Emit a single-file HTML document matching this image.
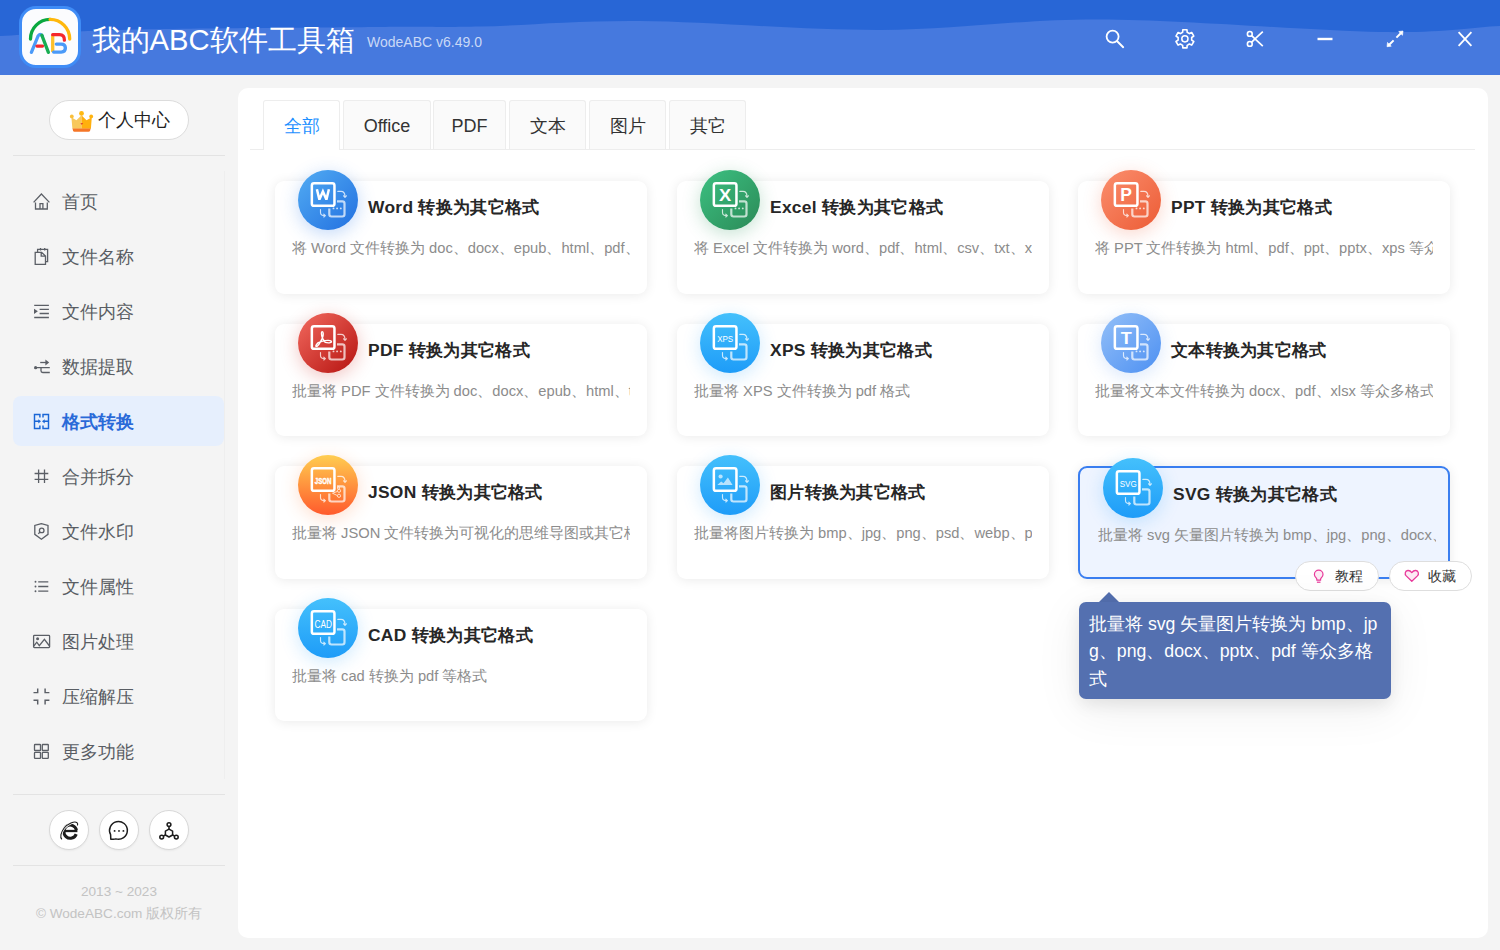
<!DOCTYPE html>
<html><head><meta charset="utf-8">
<style>
*{box-sizing:border-box;margin:0;padding:0}
html,body{width:1500px;height:950px;overflow:hidden}
body{position:relative;background:#f4f4f4;font-family:"Liberation Sans",sans-serif;color:#333}
.abs{position:absolute}
#hdr{position:absolute;left:0;top:0;width:1500px;height:75px;background:#4679de;overflow:hidden}
#hdr svg.wave{position:absolute;left:0;top:0}
#logo{position:absolute;left:19px;top:6px;width:62px;height:62px;border-radius:17px;background:#fbfcfe;border:3px solid #3f8cf6}
#title{position:absolute;left:91.5px;top:21.5px;font-size:29.2px;color:#fff;line-height:36px;white-space:nowrap}
#ver{position:absolute;left:367px;top:34px;font-size:14px;color:#c9d8f6;line-height:16px;white-space:nowrap}
.hic{position:absolute;top:0}
/* sidebar */
#pill{position:absolute;left:49px;top:100px;width:140px;height:40px;border:1px solid #dcdcdc;border-radius:20px;background:#fff}
#pill span{position:absolute;left:48px;top:9px;font-size:18px;line-height:20px;color:#222;white-space:nowrap}
.hr{position:absolute;left:13px;width:212px;height:1px;background:#e3e3e3}
#vline{position:absolute;left:224px;top:171px;width:1px;height:608px;background:#eeeeee}
.mi{position:absolute;left:13px;width:211px;height:50px;border-radius:8px}
.mi.act{background:#e6effd}
.mi svg{position:absolute;left:15px;top:10px}
.mi span{position:absolute;left:49px;top:15.7px;font-size:18px;line-height:20px;color:#595d63;white-space:nowrap}
.mi.act span{color:#2a6ad8;font-weight:bold}
.circ{position:absolute;top:810px;width:40px;height:40px;border-radius:50%;background:#fff;border:1px solid #d8d8d8;box-shadow:0 1px 2px rgba(0,0,0,.05)}
.circ svg{position:absolute;left:0;top:0}
.copy{position:absolute;left:0;width:238px;text-align:center;font-size:13.6px;line-height:16px;color:#c3c3c3;white-space:nowrap}
/* main */
#main{position:absolute;left:238px;top:88px;width:1250px;height:850px;background:#fff;border-radius:10px}
#tabline{position:absolute;left:250px;top:149px;width:1225px;height:1px;background:#ededed}
.tab{position:absolute;top:100px;height:49px;border:1px solid #ededed;border-bottom:none;border-radius:3px 3px 0 0;background:#fafafa;text-align:center;font-size:18px;line-height:50px;color:#333}
.tab.act{background:#fff;color:#1e90ff;height:50px}
.card{position:absolute;width:372px;height:113px;background:#fff;border-radius:9px;box-shadow:0 1px 12px rgba(0,0,0,.085)}
.card.hov{background:#eef4ff;border:2px solid #3a7ef0;height:113px}
.ic{position:absolute;left:22.5px;top:-11px;width:60px;height:60px;border-radius:50%}
.ic svg{position:absolute;left:0;top:0}
.ct{position:absolute;left:93px;top:15px;letter-spacing:0.3px;font-size:17.4px;line-height:22px;font-weight:bold;color:#262626;white-space:nowrap}
.cd{position:absolute;left:17px;top:58px;width:338px;overflow:hidden;font-size:14.7px;line-height:18px;color:#8c8c8c;white-space:nowrap}
.hov .ic{left:23px;top:-10px}
.hov .ct{left:93px;top:15px}
.hov .cd{left:18px;top:58px}
.btn{position:absolute;top:561px;height:30px;border:1px solid #dedede;border-radius:15px;background:#fff;font-size:14px;line-height:28px;color:#333;white-space:nowrap}
#tip{position:absolute;left:1079px;top:602px;width:312px;height:97px;background:#5470b0;border-radius:7px;box-shadow:0 6px 16px rgba(0,0,0,.08),0 10px 48px rgba(0,0,0,.07)}
#tip div{position:absolute;left:10px;top:8.7px;font-size:17.7px;line-height:27.5px;color:#fff;white-space:nowrap}
#tiparr{position:absolute;left:1099px;top:592px;width:0;height:0;border-left:10px solid transparent;border-right:10px solid transparent;border-bottom:10px solid #5470b0}
</style></head><body>

<div id="hdr">
<svg class="wave" width="1500" height="75" viewBox="0 0 1500 75"><path d="M0 0H1500V26C1470.0 27.3 1446.7 33.1 1380.0 32.0C1313.3 30.9 1183.3 19.8 1100.0 19.5C1016.7 19.2 956.7 29.8 880.0 30.0C803.3 30.2 706.7 21.6 640.0 21.0C573.3 20.4 523.3 25.6 480.0 26.6C436.7 27.6 440.0 26.4 380.0 27.0C320.0 27.6 183.3 28.5 120.0 30.0C56.7 31.5 30.0 34.7 0.0 36.0Z" fill="#2866d6"/>
<g fill="none" stroke="#fff" stroke-linecap="round" stroke-linejoin="round">
<circle cx="1112.6" cy="36.6" r="6" stroke-width="1.8"/>
<path d="M1117.2 41.3L1123.2 47.2" stroke-width="1.9"/>
<path d="M1182.65 32.28 L1182.81 29.74 L1186.99 29.74 L1187.15 32.28 L1189.43 33.59 L1191.70 32.46 L1193.79 36.08 L1191.67 37.48 L1191.67 40.12 L1193.79 41.52 L1191.70 45.14 L1189.43 44.01 L1187.15 45.32 L1186.99 47.86 L1182.81 47.86 L1182.65 45.32 L1180.37 44.01 L1178.10 45.14 L1176.01 41.52 L1178.13 40.12 L1178.13 37.48 L1176.01 36.08 L1178.10 32.46 L1180.37 33.59Z" stroke-width="1.6"/>
<circle cx="1184.9" cy="38.8" r="3.1" stroke-width="1.5"/>
<circle cx="1249.8" cy="33.9" r="2.4" stroke-width="1.6"/>
<circle cx="1249.8" cy="43.9" r="2.4" stroke-width="1.6"/>
<path d="M1251.7 35.6L1255 38.9L1262.8 31.6M1251.7 42.2L1255 38.9L1262.8 46.2" stroke-width="1.7" stroke-linecap="butt"/>
<path d="M1317.5 39H1332.5" stroke-width="2.4" stroke-linecap="butt"/>
<path d="M1396.4 37.6L1400.8 33.2M1393.6 40.4L1389.2 44.8" stroke-width="2" stroke-linecap="butt"/>
<path d="M1458.6 32.2L1471.4 45.9M1471.4 32.2L1458.6 45.9" stroke-width="1.8" stroke-linecap="butt"/>
</g>
<path d="M1403 31L1398.7 31.5L1402.5 35.3Z M1387 46.7L1391.3 46.2L1387.5 42.4Z" fill="#fff" stroke="#fff" stroke-width="0.6" stroke-linejoin="round"/>
</svg>
<div id="logo"></div>
<svg class="wave" width="1500" height="75" viewBox="0 0 1500 75" fill="none" stroke-linecap="round" stroke-width="3.3">
<path d="M30.5 39A19.6 19.6 0 0 1 50.1 19.4" stroke="#0aa83f"/>
<path d="M50.1 19.4A19.6 19.6 0 0 1 69.7 39" stroke="#ffb80c"/>
<path d="M31.4 52.4L38 36.2Q40.2 32.6 42.4 36.2" stroke="#4a9af9"/>
<path d="M41.8 35.2L48.4 52.4" stroke="#17ad52"/>
<path d="M37 46.1H42.5" stroke="#f5262b"/>
<path d="M52.7 34.7V52.1" stroke="#fcc02b" stroke-linecap="butt"/>
<path d="M52.7 34.7H59.5Q64.6 34.7 64.4 40.2" stroke="#f5262b"/>
<path d="M56.3 44.1H61.2Q65.4 44.1 65.4 48.1Q65.4 52.1 61.2 52.1H53.6" stroke="#4a9af9"/>
</svg>
<div id="title">我的ABC软件工具箱</div>
<div id="ver">WodeABC v6.49.0</div>
</div>

<!-- sidebar -->
<div id="pill"><svg style="position:absolute;left:16px;top:5px" width="30" height="30" viewBox="0 0 30 30">
<path d="M15.5 9.2L10.4 14.2L5.4 11.2L6.4 22.8H15.5Z" fill="#f8c85c"/>
<path d="M15.5 9.2L20.5 14.2L25.8 11.2L24.9 22.8H15.5Z" fill="#ffb00e"/>
<circle cx="15.5" cy="7.4" r="2.4" fill="#ffb912"/><circle cx="5.8" cy="10.4" r="1.9" fill="#f9bf3a"/><circle cx="25.2" cy="10.4" r="1.9" fill="#ffb30f"/>
<path d="M6.5 22.6H24.6L24 25Q23.6 25.8 22.6 25.8H8.4Q7.4 25.8 7.1 25Z" fill="#f57627"/>
<path d="M14.4 17.2H17.2L15.8 18.8Z" fill="#d8262a"/>
</svg><span>个人中心</span></div>
<div class="hr" style="top:155px"></div>
<div id="vline"></div>
<div class="mi" style="top:176px"><svg width="28" height="28" viewBox="0 0 28 28" fill="none" stroke="#5b5f66" stroke-width="1.3" stroke-linejoin="miter"><path d="M5.6 16.4L13.4 8L21.4 16.4M7.5 16.4V23H19.3V16.4M12 23V17.6H14.9V23"/></svg><span>首页</span></div>
<div class="mi" style="top:231px"><svg width="28" height="28" viewBox="0 0 28 28" fill="none" stroke="#5b5f66" stroke-width="1.3" stroke-linejoin="miter"><path d="M9.6 11.2V8.3H19.6V20.6H17.6M12.5 7V9.6M16.7 7V9.6"/><path d="M7.2 11.3H13.6L17.5 15V23.3H7.2Z M13.2 11.3V15.2H17.5"/></svg><span>文件名称</span></div>
<div class="mi" style="top:286px"><svg width="28" height="28" viewBox="0 0 28 28" fill="none" stroke="#5b5f66" stroke-width="1.3" stroke-linejoin="miter"><path d="M6.2 9.4H20.9M11.6 13.4H20.9M11.6 17.5H20.9M6.2 21.5H20.9"/><path d="M6 12.7V18L9.9 15.35Z" fill="#5b5f66" stroke="none"/></svg><span>文件内容</span></div>
<div class="mi" style="top:341px"><svg width="28" height="28" viewBox="0 0 28 28" fill="none" stroke="#5b5f66" stroke-width="1.3" stroke-linejoin="miter"><path d="M12.2 11.5H19"/><path d="M21.2 11.5L17.4 8.5V14.5Z" fill="#5b5f66" stroke="none"/><circle cx="7.6" cy="16.7" r="1.6" fill="#5b5f66" stroke="none"/><path d="M7.6 16.7H21.8M13 16.7V19.8Q13 21.5 14.7 21.5H21.8"/></svg><span>数据提取</span></div>
<div class="mi act" style="top:396px"><svg width="28" height="28" viewBox="0 0 28 28" fill="none" stroke="#1a66d6" stroke-width="1.45" stroke-linejoin="miter"><path d="M11.9 11.5V8.4H6.5V22.4H11.9V19.5M15 11.5V8.4H20.5V22.4H15V19.5M6.5 15.3H11M20.5 15.3H16"/><path d="M13 15.3L10.3 13.2V17.4Z M14 15.3L16.7 13.2V17.4Z" fill="#1a66d6" stroke="none"/></svg><span>格式转换</span></div>
<div class="mi" style="top:451px"><svg width="28" height="28" viewBox="0 0 28 28" fill="none" stroke="#5b5f66" stroke-width="1.3" stroke-linejoin="miter"><path d="M10.6 8.5V22M16.5 8.5V22M6.6 12.5H20.3M6.6 18.4H20.3"/></svg><span>合并拆分</span></div>
<div class="mi" style="top:506px"><svg width="28" height="28" viewBox="0 0 28 28" fill="none" stroke="#5b5f66" stroke-width="1.3" stroke-linejoin="miter"><path d="M13.4 7.6L6.8 9.5V18.3L13.4 23.2L20 18.3V9.5Z"/><circle cx="13.7" cy="14.4" r="2.3"/><path d="M12 16.1L10.3 17.8"/></svg><span>文件水印</span></div>
<div class="mi" style="top:561px"><svg width="28" height="28" viewBox="0 0 28 28" fill="none" stroke="#5b5f66" stroke-width="1.3" stroke-linejoin="miter"><path d="M10.2 10.8H20.3M10.2 15.5H20.3M10.2 20.2H20.3"/><circle cx="7.5" cy="10.8" r="0.95" fill="#5b5f66" stroke="none"/><circle cx="7.5" cy="15.5" r="0.95" fill="#5b5f66" stroke="none"/><circle cx="7.5" cy="20.2" r="0.95" fill="#5b5f66" stroke="none"/></svg><span>文件属性</span></div>
<div class="mi" style="top:616px"><svg width="28" height="28" viewBox="0 0 28 28" fill="none" stroke="#5b5f66" stroke-width="1.3" stroke-linejoin="miter"><rect x="5.6" y="9.4" width="16" height="12.2" rx="0.8"/><circle cx="9.6" cy="12.7" r="1.5" fill="#5b5f66" stroke="none"/><path d="M5.8 20L8.8 16.2L11.3 19.6L16.4 13.4L21.5 20"/></svg><span>图片处理</span></div>
<div class="mi" style="top:671px"><svg width="28" height="28" viewBox="0 0 28 28" fill="none" stroke="#5b5f66" stroke-width="1.45" stroke-linejoin="miter"><path d="M9.7 7.4V11.6H5.5M17.1 7.4V11.6H21.4M5.5 19.2H9.7V23.4M21.4 19.2H17.1V23.4"/></svg><span>压缩解压</span></div>
<div class="mi" style="top:726px"><svg width="28" height="28" viewBox="0 0 28 28" fill="none" stroke="#5b5f66" stroke-width="1.3" stroke-linejoin="miter"><rect x="6.5" y="8.5" width="6" height="6" rx="0.6"/><rect x="14.3" y="8.5" width="6" height="6" rx="0.6"/><rect x="6.5" y="16.4" width="6" height="6" rx="0.6"/><rect x="14.3" y="16.4" width="6" height="6" rx="0.6"/></svg><span>更多功能</span></div>
<div class="hr" style="top:794px"></div>
<div class="circ" style="left:49px"><svg width="40" height="40" viewBox="0 0 40 40" fill="none" stroke="#1c1c1c" style="position:absolute;left:-1px;top:-1px">
<path d="M16 21H28.4" stroke-width="2.3"/>
<path d="M27.6 21A6.4 6.6 0 1 0 26.8 24.9" stroke-width="3.1" transform="rotate(-8 21.3 21.5)"/>
<path d="M12.9 29.3C10.6 27.4 12 22.4 15 18.3C18.6 13.6 25.6 10.8 28 12.7C29 13.6 28.9 14.6 28.3 15.5" stroke="#fff" stroke-width="2.4"/>
<path d="M12.9 29.3C10.6 27.4 12 22.4 15 18.3C18.6 13.6 25.6 10.8 28 12.7C29 13.6 28.9 14.6 28.3 15.5" stroke-width="1.1"/>
</svg></div>
<div class="circ" style="left:99px"><svg width="40" height="40" viewBox="0 0 40 40" fill="none" stroke="#1c1c1c" style="position:absolute;left:-1px;top:-1px">
<path d="M11.6 24.6A8.9 8.9 0 1 1 16.8 28.9Q15.5 29.4 14 29.3H11.8Z" stroke-width="1.5" stroke-linejoin="round"/>
<circle cx="15.6" cy="20.9" r="0.95" fill="#1c1c1c" stroke="none"/><circle cx="20" cy="20.9" r="0.95" fill="#1c1c1c" stroke="none"/><circle cx="24.4" cy="20.9" r="0.95" fill="#1c1c1c" stroke="none"/>
</svg></div>
<div class="circ" style="left:149px"><svg width="40" height="40" viewBox="0 0 40 40" fill="none" stroke="#1c1c1c" stroke-width="1.5" style="position:absolute;left:-1px;top:-1px">
<path d="M20 19.1L23.6 21.1V25L20 27L16.4 25V21.1Z" stroke-linejoin="round"/>
<path d="M20 19.1V16.6M16.4 25L14.3 26.2M23.6 25L25.7 26.2"/>
<circle cx="20" cy="14.6" r="1.9"/><circle cx="12.7" cy="27.1" r="1.9"/><circle cx="27.3" cy="27.1" r="1.9"/>
</svg></div>
<div class="hr" style="top:865px"></div>
<div class="copy" style="top:884px">2013 ~ 2023</div>
<div class="copy" style="top:906px">© WodeABC.com 版权所有</div>

<!-- main -->
<div id="main"></div>
<div id="tabline"></div>
<div class="tab act" style="left:263px;width:77px">全部</div>
<div class="tab" style="left:343px;width:88px">Office</div>
<div class="tab" style="left:433px;width:73px">PDF</div>
<div class="tab" style="left:509px;width:77px">文本</div>
<div class="tab" style="left:589px;width:77px">图片</div>
<div class="tab" style="left:669px;width:77px">其它</div>

<!--CARDS-->
<div class="card" style="left:275px;top:181px"><div class="ic" style="background:linear-gradient(135deg,#52acf3,#2270e0);box-shadow:0 4px 18px rgba(40,120,235,.28)"><svg width="60" height="60" viewBox="0 0 60 60"><path d="M39 31.3H44.3Q46.5 31.3 46.5 33.5V44.3Q46.5 46.5 44.3 46.5H33.5Q31.3 46.5 31.3 44.3V38.6" fill="none" stroke="rgba(255,255,255,.7)" stroke-width="2.2"/><g fill="rgba(255,255,255,.75)"><circle cx="35.5" cy="38.4" r="0.95"/><circle cx="39.1" cy="38.4" r="0.95"/><circle cx="42.8" cy="38.4" r="0.95"/></g><g fill="none" stroke="rgba(255,255,255,.75)" stroke-width="1.15" stroke-linecap="round" stroke-linejoin="round"><path d="M39.8 21.4H43Q47 21.4 47 26.8M45.6 25.8L47 27.4L48.4 25.8"/><path d="M22.5 39.6V42.4Q22.5 45.6 26.8 45.6M25.8 44.2L27.4 45.6L25.8 47"/></g><rect x="13.85" y="13.25" width="22.6" height="22.6" rx="2.2" fill="none" stroke="#fff" stroke-width="2.5"/><path d="M18.9 19.2L21.4 29.6L24.9 21.4L28.4 29.6L30.9 19.2" fill="none" stroke="#fff" stroke-width="2.5" stroke-linejoin="miter" stroke-miterlimit="3"/></svg></div><div class="ct">Word 转换为其它格式</div><div class="cd">将 Word 文件转换为 doc、docx、epub、html、pdf、ppt 等格式</div></div>
<div class="card" style="left:677px;top:181px"><div class="ic" style="background:linear-gradient(135deg,#3cc182,#2b8a57);box-shadow:0 4px 18px rgba(45,150,95,.28)"><svg width="60" height="60" viewBox="0 0 60 60"><path d="M39 31.3H44.3Q46.5 31.3 46.5 33.5V44.3Q46.5 46.5 44.3 46.5H33.5Q31.3 46.5 31.3 44.3V38.6" fill="none" stroke="rgba(255,255,255,.7)" stroke-width="2.2"/><g fill="rgba(255,255,255,.75)"><circle cx="35.5" cy="38.4" r="0.95"/><circle cx="39.1" cy="38.4" r="0.95"/><circle cx="42.8" cy="38.4" r="0.95"/></g><g fill="none" stroke="rgba(255,255,255,.75)" stroke-width="1.15" stroke-linecap="round" stroke-linejoin="round"><path d="M39.8 21.4H43Q47 21.4 47 26.8M45.6 25.8L47 27.4L48.4 25.8"/><path d="M22.5 39.6V42.4Q22.5 45.6 26.8 45.6M25.8 44.2L27.4 45.6L25.8 47"/></g><rect x="13.85" y="13.25" width="22.6" height="22.6" rx="2.2" fill="none" stroke="#fff" stroke-width="2.5"/><text x="25.15" y="31.4" text-anchor="middle" fill="#fff" font-family="Liberation Sans" font-weight="bold" font-size="17" textLength="12.2" lengthAdjust="spacingAndGlyphs">X</text></svg></div><div class="ct">Excel 转换为其它格式</div><div class="cd">将 Excel 文件转换为 word、pdf、html、csv、txt、xml 等格式</div></div>
<div class="card" style="left:1078px;top:181px"><div class="ic" style="background:linear-gradient(135deg,#fb8f6e,#ec5b35);box-shadow:0 4px 18px rgba(240,100,60,.26)"><svg width="60" height="60" viewBox="0 0 60 60"><path d="M39 31.3H44.3Q46.5 31.3 46.5 33.5V44.3Q46.5 46.5 44.3 46.5H33.5Q31.3 46.5 31.3 44.3V38.6" fill="none" stroke="rgba(255,255,255,.7)" stroke-width="2.2"/><g fill="rgba(255,255,255,.75)"><circle cx="35.5" cy="38.4" r="0.95"/><circle cx="39.1" cy="38.4" r="0.95"/><circle cx="42.8" cy="38.4" r="0.95"/></g><g fill="none" stroke="rgba(255,255,255,.75)" stroke-width="1.15" stroke-linecap="round" stroke-linejoin="round"><path d="M39.8 21.4H43Q47 21.4 47 26.8M45.6 25.8L47 27.4L48.4 25.8"/><path d="M22.5 39.6V42.4Q22.5 45.6 26.8 45.6M25.8 44.2L27.4 45.6L25.8 47"/></g><rect x="13.85" y="13.25" width="22.6" height="22.6" rx="2.2" fill="none" stroke="#fff" stroke-width="2.5"/><text x="25.15" y="31.3" text-anchor="middle" fill="#fff" font-family="Liberation Sans" font-weight="bold" font-size="17.5" >P</text></svg></div><div class="ct">PPT 转换为其它格式</div><div class="cd">将 PPT 文件转换为 html、pdf、ppt、pptx、xps 等众多格式</div></div>

<div class="card" style="left:275px;top:324px;height:112px"><div class="ic" style="background:linear-gradient(135deg,#f26a5f,#b5120f);box-shadow:0 4px 18px rgba(200,30,25,.26)"><svg width="60" height="60" viewBox="0 0 60 60"><path d="M39 31.3H44.3Q46.5 31.3 46.5 33.5V44.3Q46.5 46.5 44.3 46.5H33.5Q31.3 46.5 31.3 44.3V38.6" fill="none" stroke="rgba(255,255,255,.7)" stroke-width="2.2"/><g fill="rgba(255,255,255,.75)"><circle cx="35.5" cy="38.4" r="0.95"/><circle cx="39.1" cy="38.4" r="0.95"/><circle cx="42.8" cy="38.4" r="0.95"/></g><g fill="none" stroke="rgba(255,255,255,.75)" stroke-width="1.15" stroke-linecap="round" stroke-linejoin="round"><path d="M39.8 21.4H43Q47 21.4 47 26.8M45.6 25.8L47 27.4L48.4 25.8"/><path d="M22.5 39.6V42.4Q22.5 45.6 26.8 45.6M25.8 44.2L27.4 45.6L25.8 47"/></g><rect x="13.85" y="13.25" width="22.6" height="22.6" rx="2.2" fill="none" stroke="#fff" stroke-width="2.5"/><path d="M24.3 18.6C23.1 18.6 23.3 22.2 24.4 25.1L27.2 29.4C29.6 30.1 33.6 30.1 33.4 28.6C33.2 27 28.3 27.2 24.5 28.1L20.3 29.6C18.2 31.8 17.4 32.9 18 33.3C18.9 33.7 21 31.3 22.1 29.3L24.4 25.1C25.6 22.1 25.5 18.6 24.3 18.6Z" fill="none" stroke="#fff" stroke-width="1.4" stroke-linejoin="round"/></svg></div><div class="ct">PDF 转换为其它格式</div><div class="cd">批量将 PDF 文件转换为 doc、docx、epub、html、txt 等格式</div></div>
<div class="card" style="left:677px;top:324px;height:112px"><div class="ic" style="background:linear-gradient(180deg,#44c0fc,#1e9cf8);box-shadow:0 4px 18px rgba(30,160,250,.22)"><svg width="60" height="60" viewBox="0 0 60 60"><path d="M39 31.3H44.3Q46.5 31.3 46.5 33.5V44.3Q46.5 46.5 44.3 46.5H33.5Q31.3 46.5 31.3 44.3V38.6" fill="none" stroke="rgba(255,255,255,.7)" stroke-width="2.2"/><g fill="none" stroke="rgba(255,255,255,.75)" stroke-width="1.15" stroke-linecap="round" stroke-linejoin="round"><path d="M39.8 21.4H43Q47 21.4 47 26.8M45.6 25.8L47 27.4L48.4 25.8"/><path d="M22.5 39.6V42.4Q22.5 45.6 26.8 45.6M25.8 44.2L27.4 45.6L25.8 47"/></g><rect x="13.85" y="13.25" width="22.6" height="22.6" rx="2.2" fill="none" stroke="#fff" stroke-width="2.5"/><text x="25.15" y="28.6" text-anchor="middle" fill="#fff" font-family="Liberation Sans" font-size="8.6" font-weight="normal" textLength="16" lengthAdjust="spacingAndGlyphs">XPS</text></svg></div><div class="ct">XPS 转换为其它格式</div><div class="cd">批量将 XPS 文件转换为 pdf 格式</div></div>
<div class="card" style="left:1078px;top:324px;height:112px"><div class="ic" style="background:linear-gradient(135deg,#94c0f8,#4d90f2);box-shadow:0 4px 18px rgba(80,145,240,.22)"><svg width="60" height="60" viewBox="0 0 60 60"><path d="M39 31.3H44.3Q46.5 31.3 46.5 33.5V44.3Q46.5 46.5 44.3 46.5H33.5Q31.3 46.5 31.3 44.3V38.6" fill="none" stroke="rgba(255,255,255,.7)" stroke-width="2.2"/><g fill="rgba(255,255,255,.75)"><circle cx="35.5" cy="38.4" r="0.95"/><circle cx="39.1" cy="38.4" r="0.95"/><circle cx="42.8" cy="38.4" r="0.95"/></g><g fill="none" stroke="rgba(255,255,255,.75)" stroke-width="1.15" stroke-linecap="round" stroke-linejoin="round"><path d="M39.8 21.4H43Q47 21.4 47 26.8M45.6 25.8L47 27.4L48.4 25.8"/><path d="M22.5 39.6V42.4Q22.5 45.6 26.8 45.6M25.8 44.2L27.4 45.6L25.8 47"/></g><rect x="13.85" y="13.25" width="22.6" height="22.6" rx="2.2" fill="none" stroke="#fff" stroke-width="2.5"/><text x="25.15" y="31.4" text-anchor="middle" fill="#fff" font-family="Liberation Sans" font-weight="bold" font-size="17" textLength="11" lengthAdjust="spacingAndGlyphs">T</text></svg></div><div class="ct">文本转换为其它格式</div><div class="cd">批量将文本文件转换为 docx、pdf、xlsx 等众多格式</div></div>

<div class="card" style="left:275px;top:466px"><div class="ic" style="background:linear-gradient(180deg,#ffcd50,#ff5a2c);box-shadow:0 4px 18px rgba(255,120,50,.24)"><svg width="60" height="60" viewBox="0 0 60 60"><path d="M39 31.3H44.3Q46.5 31.3 46.5 33.5V44.3Q46.5 46.5 44.3 46.5H33.5Q31.3 46.5 31.3 44.3V38.6" fill="none" stroke="rgba(255,255,255,.7)" stroke-width="2.2"/><g fill="none" stroke="rgba(255,255,255,.7)" stroke-width="1"><path d="M34.5 38.2L39 36.6M34.5 38.2L39 40.4"/><circle cx="41" cy="35.8" r="1.6"/><circle cx="41" cy="40.8" r="1.6"/><circle cx="40.5" cy="33" r="1.1"/></g><g fill="none" stroke="rgba(255,255,255,.75)" stroke-width="1.15" stroke-linecap="round" stroke-linejoin="round"><path d="M39.8 21.4H43Q47 21.4 47 26.8M45.6 25.8L47 27.4L48.4 25.8"/><path d="M22.5 39.6V42.4Q22.5 45.6 26.8 45.6M25.8 44.2L27.4 45.6L25.8 47"/></g><rect x="13.85" y="13.25" width="22.6" height="22.6" rx="2.2" fill="none" stroke="#fff" stroke-width="2.5"/><text x="25.15" y="28.5" text-anchor="middle" fill="#fff" stroke="#fff" stroke-width="0.45" font-family="Liberation Sans" font-size="9.4" font-weight="bold" textLength="16.6" lengthAdjust="spacingAndGlyphs">JSON</text></svg></div><div class="ct">JSON 转换为其它格式</div><div class="cd">批量将 JSON 文件转换为可视化的思维导图或其它格式</div></div>
<div class="card" style="left:677px;top:466px"><div class="ic" style="background:linear-gradient(180deg,#44c0fc,#1e9cf8);box-shadow:0 4px 18px rgba(30,160,250,.22)"><svg width="60" height="60" viewBox="0 0 60 60"><path d="M39 31.3H44.3Q46.5 31.3 46.5 33.5V44.3Q46.5 46.5 44.3 46.5H33.5Q31.3 46.5 31.3 44.3V38.6" fill="none" stroke="rgba(255,255,255,.7)" stroke-width="2.2"/><g fill="none" stroke="rgba(255,255,255,.75)" stroke-width="1.15" stroke-linecap="round" stroke-linejoin="round"><path d="M39.8 21.4H43Q47 21.4 47 26.8M45.6 25.8L47 27.4L48.4 25.8"/><path d="M22.5 39.6V42.4Q22.5 45.6 26.8 45.6M25.8 44.2L27.4 45.6L25.8 47"/></g><rect x="13.85" y="13.25" width="22.6" height="22.6" rx="2.2" fill="none" stroke="#fff" stroke-width="2.5"/><g fill="rgba(255,255,255,.65)"><circle cx="20.6" cy="21.5" r="2.1"/><path d="M17.3 30L21.2 26.4L23.5 28.2L27.9 22.6L32.6 30Z"/></g></svg></div><div class="ct">图片转换为其它格式</div><div class="cd">批量将图片转换为 bmp、jpg、png、psd、webp、pdf 等格式</div></div>
<div class="card hov" style="left:1078px;top:466px"><div class="ic" style="background:linear-gradient(180deg,#44c0fc,#1e9cf8);box-shadow:0 4px 18px rgba(30,160,250,.22)"><svg width="60" height="60" viewBox="0 0 60 60"><path d="M39 31.3H44.3Q46.5 31.3 46.5 33.5V44.3Q46.5 46.5 44.3 46.5H33.5Q31.3 46.5 31.3 44.3V38.6" fill="none" stroke="rgba(255,255,255,.7)" stroke-width="2.2"/><g fill="none" stroke="rgba(255,255,255,.75)" stroke-width="1.15" stroke-linecap="round" stroke-linejoin="round"><path d="M39.8 21.4H43Q47 21.4 47 26.8M45.6 25.8L47 27.4L48.4 25.8"/><path d="M22.5 39.6V42.4Q22.5 45.6 26.8 45.6M25.8 44.2L27.4 45.6L25.8 47"/></g><rect x="13.85" y="13.25" width="22.6" height="22.6" rx="2.2" fill="none" stroke="#fff" stroke-width="2.5"/><text x="25.15" y="28.9" text-anchor="middle" fill="#fff" font-family="Liberation Sans" font-size="8.8" font-weight="normal" textLength="17" lengthAdjust="spacingAndGlyphs">SVG</text></svg></div><div class="ct">SVG 转换为其它格式</div><div class="cd">批量将 svg 矢量图片转换为 bmp、jpg、png、docx、pptx、pdf 等众多格式</div></div>

<div class="card" style="left:275px;top:609px;height:112px"><div class="ic" style="background:linear-gradient(180deg,#44c0fc,#1e9cf8);box-shadow:0 4px 18px rgba(30,160,250,.22)"><svg width="60" height="60" viewBox="0 0 60 60"><path d="M39 31.3H44.3Q46.5 31.3 46.5 33.5V44.3Q46.5 46.5 44.3 46.5H33.5Q31.3 46.5 31.3 44.3V38.6" fill="none" stroke="rgba(255,255,255,.7)" stroke-width="2.2"/><g fill="none" stroke="rgba(255,255,255,.75)" stroke-width="1.15" stroke-linecap="round" stroke-linejoin="round"><path d="M39.8 21.4H43Q47 21.4 47 26.8M45.6 25.8L47 27.4L48.4 25.8"/><path d="M22.5 39.6V42.4Q22.5 45.6 26.8 45.6M25.8 44.2L27.4 45.6L25.8 47"/></g><rect x="13.85" y="13.25" width="22.6" height="22.6" rx="2.2" fill="none" stroke="#fff" stroke-width="2.5"/><text x="25.15" y="29.6" text-anchor="middle" fill="#fff" font-family="Liberation Sans" font-size="11.5" font-weight="normal" textLength="17.5" lengthAdjust="spacingAndGlyphs">CAD</text></svg></div><div class="ct">CAD 转换为其它格式</div><div class="cd">批量将 cad 转换为 pdf 等格式</div></div>

<div class="btn" style="left:1295px;width:84px"><svg style="position:absolute;left:16px;top:7px" width="14" height="16" viewBox="0 0 14 16" fill="none" stroke="#e8399a" stroke-width="1.2"><path d="M4.8 11.2V10.2C4.8 9 2.4 8 2.4 5.4A4.3 4.3 0 0 1 11 5.4C11 8 8.6 9 8.6 10.2V11.2Z" fill="#fdeaf4" stroke-linejoin="round"/><path d="M4.9 13.2H8.5"/></svg><span style="position:absolute;left:39px;top:0">教程</span></div>
<div class="btn" style="left:1389px;width:83px"><svg style="position:absolute;left:14px;top:7px" width="16" height="14" viewBox="0 0 16 14" fill="none" stroke="#e8399a" stroke-width="1.3"><path d="M7.8 12.3L2.2 6.9C0.4 5 1.1 1.8 3.8 1.5C5.6 1.3 6.9 2.4 7.8 3.6C8.7 2.4 10 1.3 11.8 1.5C14.5 1.8 15.2 5 13.4 6.9Z" fill="#fdeaf4" stroke-linejoin="round"/></svg><span style="position:absolute;left:38px;top:0">收藏</span></div>
<div id="tiparr"></div>
<div id="tip"><div>批量将 svg 矢量图片转换为 bmp、jp<br>g、png、docx、pptx、pdf 等众多格<br>式</div></div>

</body></html>
